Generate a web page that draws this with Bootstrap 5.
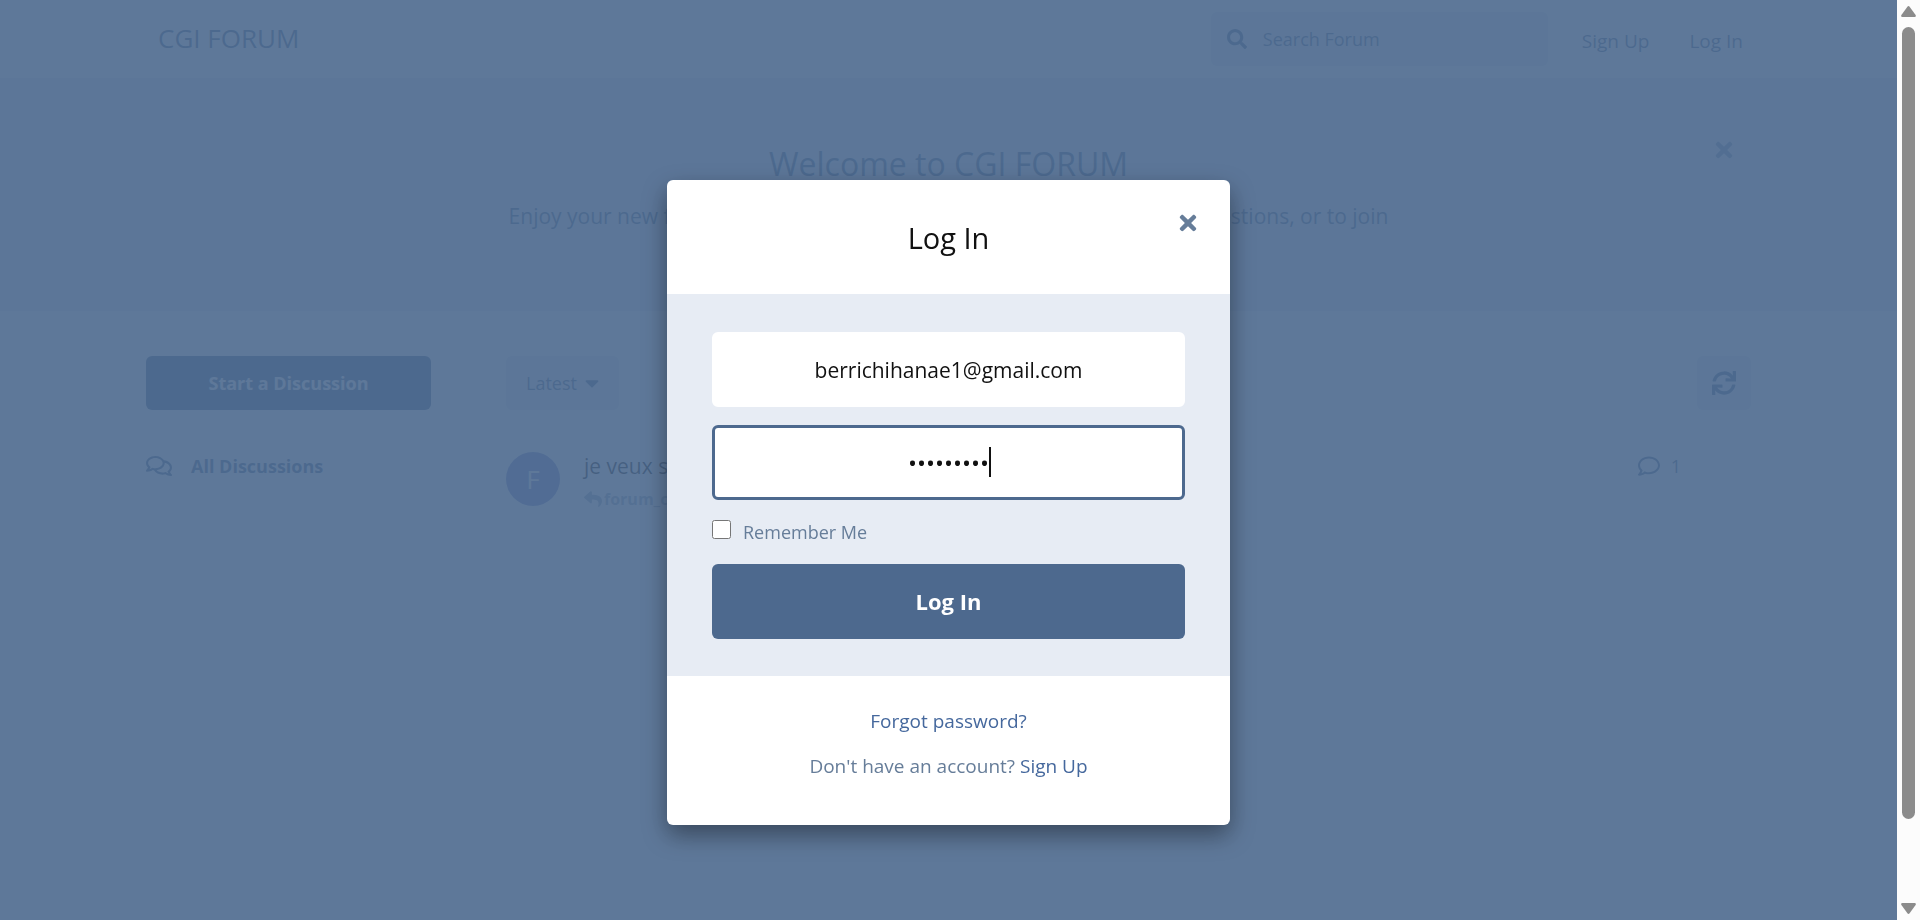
<!DOCTYPE html>
<html lang="en">
<head>
<meta charset="utf-8">
<meta name="viewport" content="width=device-width, initial-scale=1">
<title>CGI FORUM</title>
<link href="https://cdn.jsdelivr.net/npm/bootstrap@5.3.0/dist/css/bootstrap.min.css" rel="stylesheet">
<style>
:root { --primary: #4d698e; --muted: #667d99; --soft: #e3e9f2; --rail: 23px; }
body { font-family: "Open Sans", "Noto Sans", sans-serif; font-size: 18px; line-height: 28px; color: #111; background: #fff; overflow: hidden; }
a { text-decoration: none; }
.icon { fill: currentColor; display: block; flex: none; }
.forum-app { min-height: 100vh; margin-right: var(--rail); }
.forum-width { max-width: 1605px; margin: 0 auto; }
.forum-header { height: 78px; }
.forum-brand { font-size: 26px; color: var(--primary); padding: 0 12px 2px; }
.forum-search { width: 337px; height: 54px; background: var(--soft); border-radius: 6px; padding: 0 16px; color: var(--primary); margin-right: 14px; }
.forum-search input { border: 0; background: transparent; outline: 0; min-width: 0; color: var(--primary); padding: 0; }
.forum-search input::placeholder { color: var(--primary); opacity: 1; }
.header-link { color: var(--primary); font-size: 19px; padding: 4px 20px 0; }
.hero { background: var(--soft); color: var(--primary); padding: 66px 0 41px; }
.hero h1 { font-size: 32px; line-height: 40px; font-weight: 400; margin: 0 0 14px; }
.hero p { font-size: 21px; line-height: 36px; max-width: 900px; margin: 0 auto; }
.hero-close { position: absolute; top: -6px; right: 18px; border: 0; background: none; color: #8198b5; padding: 0; }
.forum-main { padding-top: 45px; }
.side { width: 285px; margin-right: 75px; }
.soft-btn, .start-btn { height: 54px; border: 0; border-radius: 6px; }
.start-btn { background: var(--primary); color: #fff; font-weight: 700; }
.soft-btn { background: var(--soft); color: var(--primary); padding: 0 20px; }
.refresh-btn { padding: 0 15px; }
.all-link { color: var(--primary); font-weight: 700; margin-top: 42px; gap: 19px; }
.post { margin-top: 42px; }
.avatar { width: 54px; height: 54px; border-radius: 50%; background: #7887c9; color: #fff; font-size: 26px; margin-right: 24px; }
.post h2 { font-size: 21px; line-height: 28px; font-weight: 400; margin: 0 0 7px; }
.post-meta { color: var(--muted); font-size: 16px; line-height: 24px; font-weight: 700; gap: 2px; opacity: .65; }
.post-count { color: var(--primary); margin-right: 70px; gap: 11px; }

.login-layer { display: block; right: var(--rail); width: auto; background: rgba(77,105,142,.9); overflow: hidden; }
.login-dialog { max-width: 563px; margin: 180px auto 0; }
.login-box { border: 0; border-radius: 6px; box-shadow: 0 10px 24px rgba(0,0,0,.4); }
.login-head { height: 114px; padding-top: 2px; }
.login-head h2 { font-size: 29px; line-height: 36px; font-weight: 400; margin: 0; }
.login-close { position: absolute; top: 31px; right: 32px; border: 0; background: none; color: var(--muted); padding: 0; }
.login-body { background: #e7ecf4; padding: 38px 45px 37px; }
.login-field { display: block; width: 100%; height: 75px; border: 3px solid #fff; border-radius: 6px; background: #fff; font-size: 21px; text-align: center; color: #111; outline: 0; }
.email-field { margin-bottom: 18px; }
.password-field { border-color: var(--primary); font-size: 24px; caret-color: transparent; }
.text-caret { position: absolute; left: 50%; top: 22px; width: 2px; height: 30px; margin-left: 40px; background: #111; }
.remember { color: var(--muted); padding: 20px 0; gap: 12px; }
.remember input { width: 19px; height: 19px; margin: 0; }
.remember label { line-height: 24px; }
.login-btn { height: 75px; border: 0; border-radius: 6px; background: var(--primary); color: #fff; font-size: 22px; font-weight: 700; padding-bottom: 3px; }
.login-foot { color: var(--muted); font-size: 19px; padding: 30px 0 44px; line-height: 30px; }
.login-foot p { margin: 0 0 15px; }
.login-foot p:last-child { margin: 0; }
.login-foot a { color: #45689d; }

.rail { position: fixed; top: 0; right: 0; bottom: 0; width: var(--rail); background: #fcfcfc; padding: 6px 0; }
.rail-thumb { width: 13px; border-radius: 7px; background: #8b8b8b; margin: 10px 0 84px; }
</style>
</head>
<body>
<div class="forum-app">
  <header class="forum-header">
    <div class="forum-width d-flex align-items-center h-100">
      <a class="forum-brand me-auto" href="#">CGI FORUM</a>
      <label class="forum-search d-flex align-items-center gap-3">
        <svg class="icon" width="20" height="20" viewBox="0 0 512 512" aria-hidden="true"><path d="M505 442.7L405.3 343c-4.5-4.5-10.6-7-17-7H372c27.6-35.3 44-79.7 44-128C416 93.1 322.9 0 208 0S0 93.1 0 208s93.1 208 208 208c48.3 0 92.7-16.4 128-44v16.3c0 6.4 2.5 12.5 7 17l99.7 99.7c9.4 9.4 24.6 9.4 33.9 0l28.3-28.3c9.4-9.4 9.4-24.6.1-34zM208 336c-70.7 0-128-57.2-128-128 0-70.7 57.2-128 128-128 70.7 0 128 57.2 128 128 0 70.7-57.2 128-128 128z"/></svg>
        <input class="flex-grow-1" type="search" placeholder="Search Forum" aria-label="Search Forum">
      </label>
      <a class="header-link" href="#">Sign Up</a>
      <a class="header-link pe-2" href="#">Log In</a>
    </div>
  </header>

  <section class="hero text-center">
    <div class="forum-width position-relative">
      <button class="hero-close" type="button" aria-label="Close">
        <svg class="icon" width="18" height="24" viewBox="0 0 352 512" aria-hidden="true"><path d="M242.72 256l100.07-100.07c12.28-12.28 12.28-32.19 0-44.48l-22.24-22.24c-12.28-12.28-32.19-12.28-44.48 0L176 189.28 75.93 89.21c-12.28-12.28-32.19-12.28-44.48 0L9.21 111.45c-12.28 12.28-12.28 32.19 0 44.48L109.28 256 9.21 356.07c-12.28 12.28-12.28 32.19 0 44.48l22.24 22.24c12.28 12.28 32.2 12.28 44.48 0L176 322.72l100.07 100.07c12.28 12.28 32.2 12.28 44.48 0l22.24-22.24c12.28-12.28 12.28-32.19 0-44.48L242.72 256z"/></svg>
      </button>
      <h1>Welcome to CGI FORUM</h1>
      <p>Enjoy your new forum! Hop over to discuss.flarum.org if you have any questions, or to join our community!</p>
    </div>
  </section>

  <main class="forum-main forum-width d-flex">
    <nav class="side flex-shrink-0">
      <button class="start-btn w-100" type="button">Start a Discussion</button>
      <a class="all-link d-flex align-items-center" href="#">
        <svg class="icon" width="26" height="24" viewBox="0 0 576 512" aria-hidden="true"><path d="M532 386.2c27.5-27.1 44-61.1 44-98.2 0-80-76.5-146.1-176.2-157.9C368.3 72.5 294.3 32 208 32 93.1 32 0 103.6 0 192c0 37 16.5 71 44 98.2-15.3 30.7-37.3 54.5-37.7 54.9-6.3 6.7-8.1 16.5-4.4 25 3.6 8.5 12 14 21.2 14 53.5 0 96.7-20.2 125.2-38.8 9.2 2.1 18.7 3.7 28.4 4.9C208.1 407.6 281.8 448 368 448c20.8 0 40.8-2.4 59.8-6.8C456.3 459.7 499.4 480 553 480c9.2 0 17.5-5.5 21.2-14 3.6-8.5 1.9-18.3-4.4-25-.4-.3-22.5-24.1-37.8-54.8zm-392.8-92.3L122.1 305c-14.1 9.1-28.5 16.3-43.1 21.4 2.7-4.7 5.4-9.7 8-14.8l15.5-31.1L77.7 256C64.2 242.6 48 220.7 48 192c0-60.7 73.3-112 160-112s160 51.3 160 112-73.3 112-160 112c-16.5 0-33-1.9-49-5.6l-19.8-4.5zM498.3 352l-24.7 24.4 15.5 31.1c2.6 5.1 5.3 10.1 8 14.8-14.6-5.1-29-12.3-43.1-21.4l-17.1-11.1-19.9 4.6c-16 3.7-32.5 5.6-49 5.6-54 0-102.2-20.1-131.3-49.7C338 339.5 416 272.9 416 192c0-3.4-.4-6.7-.7-10C479.7 196.5 528 238.8 528 288c0 28.7-16.2 50.6-29.7 64z"/></svg>
        <span>All Discussions</span>
      </a>
    </nav>
    <div class="flex-grow-1">
      <div class="d-flex justify-content-between">
        <button class="soft-btn d-flex align-items-center gap-2" type="button">Latest
          <svg class="icon" width="14" height="22" viewBox="0 0 320 512" aria-hidden="true"><path d="M31.3 192h257.3c17.8 0 26.7 21.5 14.1 34.1L174.1 354.8c-7.8 7.8-20.5 7.8-28.3 0L17.2 226.1C4.6 213.5 13.5 192 31.3 192z"/></svg>
        </button>
        <button class="soft-btn refresh-btn" type="button" aria-label="Refresh">
          <svg class="icon" width="24" height="24" viewBox="0 0 512 512" aria-hidden="true"><path d="M440.65 12.57l4 82.77A247.16 247.16 0 0 0 255.83 8C134.73 8 33.91 94.92 12.29 209.82A12 12 0 0 0 24.09 224h49.05a12 12 0 0 0 11.67-9.26 175.91 175.91 0 0 1 317-56.94l-101.46-4.86a12 12 0 0 0-12.57 12v47.41a12 12 0 0 0 12 12H500a12 12 0 0 0 12-12V12a12 12 0 0 0-12-12h-47.37a12 12 0 0 0-11.98 12.57zM255.83 432a175.61 175.61 0 0 1-146-77.8l101.8 4.87a12 12 0 0 0 12.57-12v-47.4a12 12 0 0 0-12-12H12a12 12 0 0 0-12 12V500a12 12 0 0 0 12 12h47.35a12 12 0 0 0 12-12.6l-4.15-82.57A247.17 247.17 0 0 0 255.83 504c121.11 0 221.93-86.92 243.55-201.82a12 12 0 0 0-11.8-14.18h-49.05a12 12 0 0 0-11.67 9.26A175.86 175.86 0 0 1 255.83 432z"/></svg>
        </button>
      </div>
      <article class="post d-flex">
        <span class="avatar d-flex align-items-center justify-content-center">F</span>
        <div class="me-auto">
          <h2>je veux s</h2>
          <div class="post-meta d-flex align-items-center">
            <svg class="icon" width="18" height="18" viewBox="0 0 512 512" aria-hidden="true"><path d="M8.309 189.836L184.313 37.851C199.719 24.546 224 35.347 224 56.015v80.053c160.629 1.839 288 34.032 288 186.258 0 61.441-39.581 122.309-83.333 154.132-13.653 9.931-33.111-2.533-28.077-18.631 45.344-145.012-21.507-183.51-176.59-185.742V360c0 20.7-24.3 31.453-39.687 18.164l-176.004-152c-11.071-9.562-11.086-26.753 0-36.328z"/></svg>
            <span>forum_c</span>
          </div>
        </div>
        <div class="post-count d-flex align-items-center align-self-start">
          <svg class="icon" width="22" height="22" viewBox="0 0 512 512" aria-hidden="true"><path d="M256 32C114.6 32 0 125.1 0 240c0 47.6 19.9 91.2 52.9 126.3C38 405.7 7 439.1 6.5 439.5c-6.6 7-8.4 17.2-4.6 26S14.4 480 24 480c61.5 0 110-25.7 139.1-46.3C192 442.8 223.2 448 256 448c141.4 0 256-93.1 256-208S397.4 32 256 32zm0 368c-26.7 0-53.1-4.1-78.4-12.1l-22.7-7.2-19.5 13.8c-14.3 10.1-33.9 21.4-57.5 29 7.3-12.1 14.4-25.7 19.9-40.2l10.6-28.1-20.6-21.8C69.7 314.1 48 282.2 48 240c0-88.2 93.3-160 208-160s208 71.8 208 160-93.3 160-208 160z"/></svg>
          <span>1</span>
        </div>
      </article>
    </div>
  </main>
</div>

<div class="modal login-layer" role="dialog" aria-labelledby="loginTitle">
  <div class="modal-dialog login-dialog">
    <div class="modal-content login-box overflow-visible">
      <div class="login-head d-flex align-items-center justify-content-center">
        <h2 id="loginTitle">Log In</h2>
        <button class="login-close" type="button" aria-label="Close">
          <svg class="icon" width="20" height="24" viewBox="0 0 352 512" aria-hidden="true"><path d="M242.72 256l100.07-100.07c12.28-12.28 12.28-32.19 0-44.48l-22.24-22.24c-12.28-12.28-32.19-12.28-44.48 0L176 189.28 75.93 89.21c-12.28-12.28-32.19-12.28-44.48 0L9.21 111.45c-12.28 12.28-12.28 32.19 0 44.48L109.28 256 9.21 356.07c-12.28 12.28-12.28 32.19 0 44.48l22.24 22.24c12.28 12.28 32.2 12.28 44.48 0L176 322.72l100.07 100.07c12.28 12.28 32.2 12.28 44.48 0l22.24-22.24c12.28-12.28 12.28-32.19 0-44.48L242.72 256z"/></svg>
        </button>
      </div>
      <form class="login-body">
        <input class="login-field email-field" type="text" value="berrichihanae1@gmail.com" aria-label="Username or Email">
        <div class="position-relative">
          <input class="login-field password-field" type="password" value="password1" aria-label="Password">
          <span class="text-caret" aria-hidden="true"></span>
        </div>
        <div class="remember d-flex align-items-start">
          <input type="checkbox" id="remember">
          <label for="remember">Remember Me</label>
        </div>
        <button class="login-btn w-100" type="button">Log In</button>
      </form>
      <div class="login-foot text-center">
        <p><a href="#">Forgot password?</a></p>
        <p>Don't have an account? <a href="#">Sign Up</a></p>
      </div>
    </div>
  </div>
</div>

<div class="rail d-flex flex-column align-items-center" aria-hidden="true">
  <svg class="icon" width="15" height="11" viewBox="0 0 15 11"><path fill="#8b8b8b" d="M6.4.8q1.1-1.4 2.2 0L14.6 9q.8 2-1 2H1.4q-1.800 0-1-2z"/></svg>
  <div class="rail-thumb flex-grow-1"></div>
  <svg class="icon" width="15" height="11" viewBox="0 0 15 11"><path fill="#8b8b8b" d="M6.400 10.200q1.100 1.400 2.200 0L14.600 2q.8-2-1-2H1.400q-1.800 0-1 2z"/></svg>
</div>
<script src="https://cdn.jsdelivr.net/npm/bootstrap@5.3.0/dist/js/bootstrap.bundle.min.js"></script>
</body>
</html>
